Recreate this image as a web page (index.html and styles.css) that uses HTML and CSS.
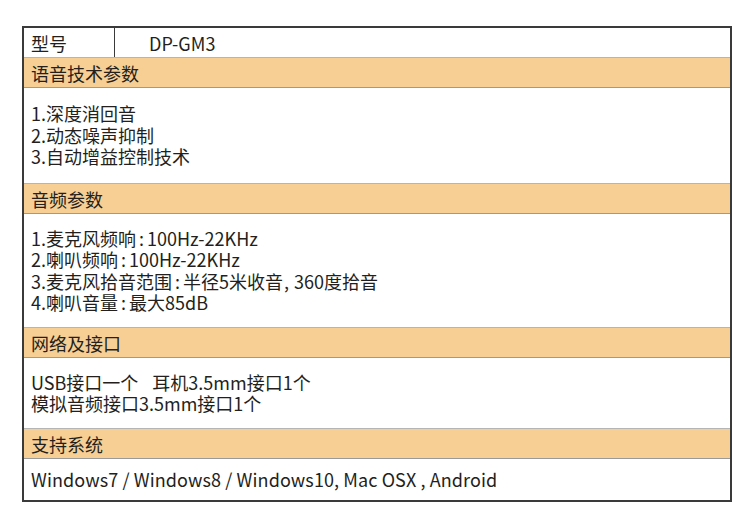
FILE: index.html
```html
<!DOCTYPE html>
<html lang="zh">
<head>
<meta charset="utf-8">
<link rel="stylesheet" href="styles.css">
</head>
<body>
<div class="spec">
  <div class="model">
    <div class="label">型号</div>
    <div class="value">DP-GM3</div>
  </div>
  <div class="head">语音技术参数</div>
  <div class="body b1">
    <div>1.深度消回音</div>
    <div>2.动态噪声抑制</div>
    <div>3.自动增益控制技术</div>
  </div>
  <div class="head">音频参数</div>
  <div class="body b2">
    <div>1.麦克风频响<span class="p">:</span>100Hz-22KHz</div>
    <div>2.喇叭频响<span class="p">:</span>100Hz-22KHz</div>
    <div>3.麦克风拾音范围<span class="p">:</span>半径5米收音<span class="p c">,</span>360度拾音</div>
    <div>4.喇叭音量<span class="p">:</span>最大85dB</div>
  </div>
  <div class="head">网络及接口</div>
  <div class="body b3">
    <div>USB接口一个<span class="gap"></span>耳机3.5mm接口1个</div>
    <div>模拟音频接口3.5mm接口1个</div>
  </div>
  <div class="head">支持系统</div>
  <div class="body b4">
    <div class="os">Windows7 / Windows8 / Windows10, Mac OSX , Android</div>
  </div>
</div>
</body>
</html>
```
FILE: styles.css
```css
html, body {
  margin: 0;
  padding: 0;
  background: #ffffff;
}
body {
  font-family: "Noto Sans CJK SC", "Noto Sans", sans-serif;
  font-size: 18px;
  color: #231f1c;
}
.spec {
  box-sizing: border-box;
  margin: 26px 0 0 22px;
  width: 710px;
  border: 2px solid #3a3a3a;
  display: flex;
  flex-direction: column;
}
.model {
  height: 29px;
  display: flex;
  align-items: center;
}
.model .label {
  box-sizing: border-box;
  width: 91px;
  height: 100%;
  display: flex;
  align-items: center;
  padding-left: 7px;
  border-right: 1px solid #3a3a3a;
}
.model .value {
  padding-left: 34px;
}
.head {
  box-sizing: border-box;
  height: 31px;
  background: #f7cf94;
  border-top: 1px solid #b5b5b5;
  border-bottom: 1px solid #9a9a9a;
  display: flex;
  align-items: center;
  padding-left: 7px;
}
.body {
  box-sizing: border-box;
  display: flex;
  flex-direction: column;
  justify-content: center;
  padding-left: 7px;
  line-height: 21.5px;
}
.p {
  margin: 0 3px;
}
.p.c {
  margin: 0 5px 0 1px;
}
.gap {
  display: inline-block;
  width: 14px;
}
.os {
  letter-spacing: 0.1px;
}
.b1 { height: 95px; }
.b2 { height: 113px; }
.b3 { height: 70px; }
.b4 { height: 41px; }
```
